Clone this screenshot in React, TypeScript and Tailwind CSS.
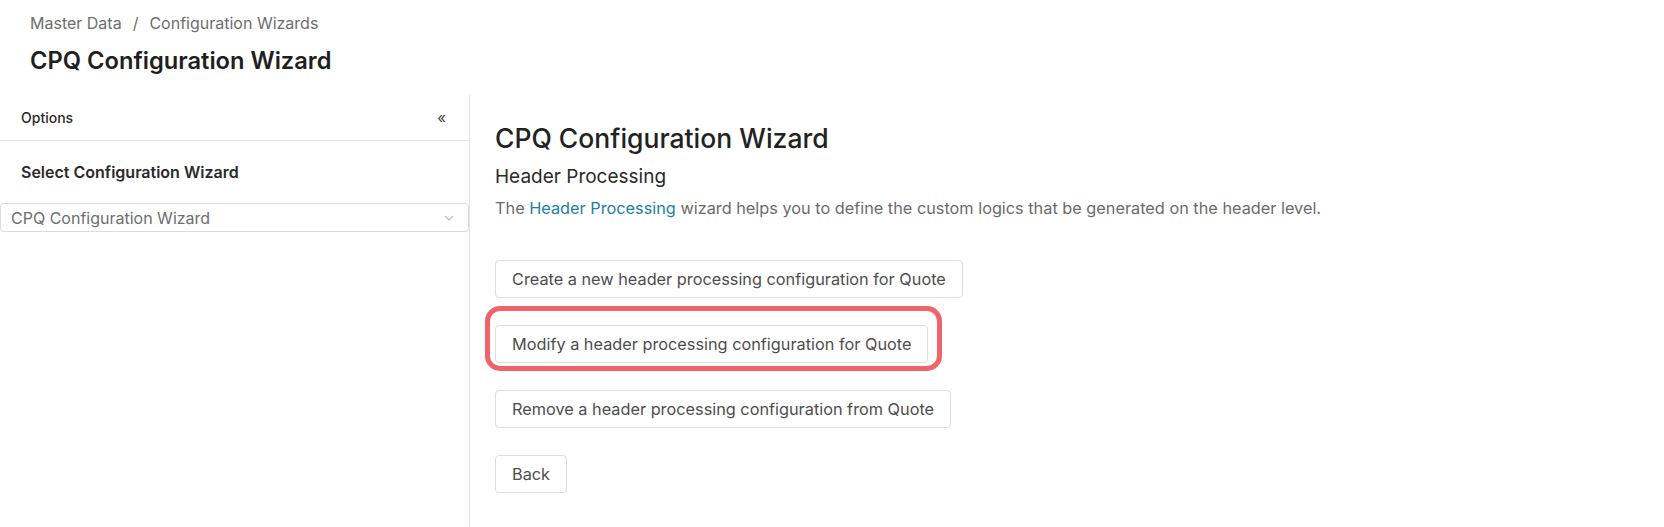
import React from "react";

const actions = [
  "Create a new header processing configuration for Quote",
  "Modify a header processing configuration for Quote",
  "Remove a header processing configuration from Quote",
];

function ActionButton({ label, marked }: { label: string; marked?: boolean }) {
  return (
    <div className="relative self-start">
      {marked && (
        <div className="pointer-events-none absolute -left-[10px] -top-[19px] -right-[14px] -bottom-[8px] rounded-[15px] border-[5px] border-[#f2626a]" />
      )}
      <button className="h-[38px] rounded-[4px] border border-[#dedede] bg-white px-[16px] text-[16.3px] text-[#4d4d4d]">
        {label}
      </button>
    </div>
  );
}

export default function App() {
  return (
    <div className="h-[527px] overflow-hidden bg-white font-['Inter',sans-serif]">
      <div className="px-[30px] pt-[13px]">
        <div className="flex items-center gap-[11px] text-[16px] leading-[20px] text-[#6e6e6e]">
          <span>Master Data</span>
          <span>/</span>
          <span>Configuration Wizards</span>
        </div>
        <h1 className="mt-[12px] text-[23.7px] font-semibold leading-[32px] text-[#1f1f1f]">
          CPQ Configuration Wizard
        </h1>
      </div>

      <div className="mt-[18px] flex h-[432px]">
        <aside className="w-[470px] shrink-0 border-r border-[#e3e3e3]">
          <div className="flex h-[46px] items-center justify-between border-b border-[#e3e3e3] pl-[21px] pr-[23px]">
            <span className="text-[14px] font-medium text-[#2a2a2a]">Options</span>
            <span className="text-[15px] leading-none text-[#444]">«</span>
          </div>
          <div className="mt-[21px] px-[21px] text-[16px] font-semibold leading-[20px] text-[#2a2a2a]">
            Select Configuration Wizard
          </div>
          <div className="mt-[21px] flex h-[29px] items-center justify-between rounded-[4px] border border-[#dcdcdc] pl-[10px] pr-[14px]">
            <span className="text-[16px] text-[#6e6e6e]">CPQ Configuration Wizard</span>
            <svg width="10" height="6" viewBox="0 0 10 6" fill="none">
              <path d="M1 1l4 4 4-4" stroke="#bdbdbd" strokeWidth="1.2" />
            </svg>
          </div>
        </aside>

        <main className="flex flex-1 flex-col pl-[25px] pt-[27px]">
          <h2 className="text-[26.5px] font-medium leading-[32px] text-[#222]">CPQ Configuration Wizard</h2>
          <h3 className="mt-[12px] text-[19px] leading-[22px] text-[#2a2a2a]">Header Processing</h3>
          <p className="mt-[10px] text-[16.3px] leading-[20px] text-[#6b6b6b]">
            The <span className="text-[#1d7fa6]">Header Processing</span> wizard helps you to define the custom logics
            that be generated on the header level.
          </p>
          <div className="mt-[42px] flex flex-col gap-[27px]">
            {actions.map((a, i) => (
              <ActionButton key={a} label={a} marked={i === 1} />
            ))}
            <ActionButton label="Back" />
          </div>
        </main>
      </div>
    </div>
  );
}
